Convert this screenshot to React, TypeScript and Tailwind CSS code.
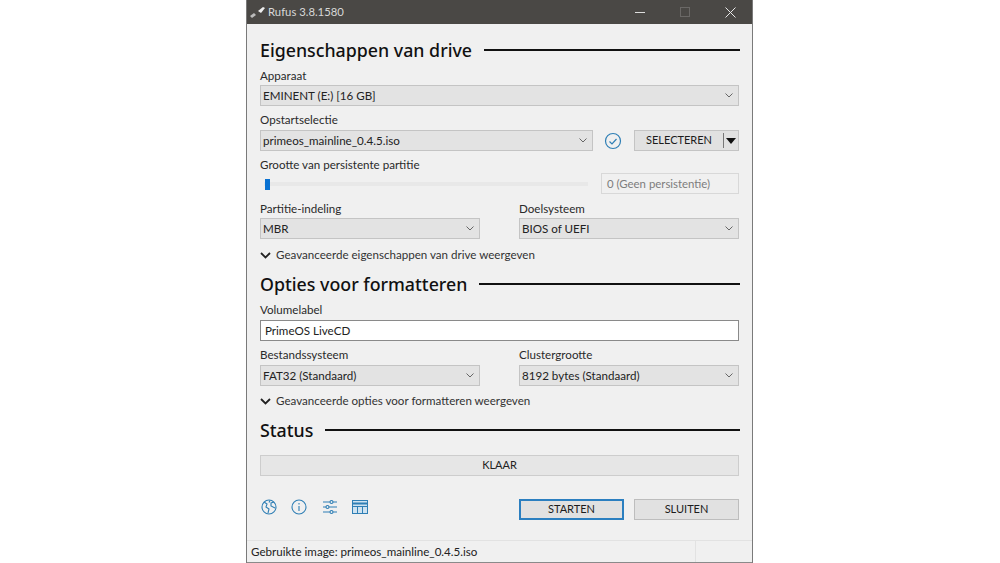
import React from 'react';

const Chevron = () => (
  <svg width="8" height="5" viewBox="0 0 8 5" className="shrink-0" fill="none" stroke="#666" strokeWidth="1">
    <path d="M.5.5L4 4 7.5.5" />
  </svg>
);

const BoldChevron = () => (
  <svg width="11" height="7" viewBox="0 0 11 7" className="shrink-0" fill="none" stroke="#222" strokeWidth="1.8">
    <path d="M1 1l4.5 4.5L10 1" />
  </svg>
);

const Select = ({ value, className = '' }: { value: string; className?: string }) => (
  <div className={`h-[21px] flex items-center justify-between bg-[#e3e3e3] border border-[#c4c4c4] pl-[2px] pr-[5px] text-[11.6px] text-[#222] ${className}`}>
    <span>{value}</span>
    <Chevron />
  </div>
);

const Label = ({ text, className = '' }: { text: string; className?: string }) => (
  <div className={`h-[20px] flex items-center text-[11.6px] text-[#2a2a2a] ${className}`}>{text}</div>
);

const Heading = ({ text }: { text: string }) => (
  <div className="flex items-center gap-[12px]">
    <span className="text-[17.8px] leading-[26px] font-medium text-[#111] whitespace-nowrap" style={{ fontFamily: '"Noto Sans", sans-serif' }}>{text}</span>
    <div className="flex-1 h-[2px] bg-[#111] mr-[-1px]" />
  </div>
);

const Expander = ({ text }: { text: string }) => (
  <div className="flex items-center gap-[5px] text-[11.6px] text-[#333] h-[20px]">
    <BoldChevron />
    <span>{text}</span>
  </div>
);

export default function App() {
  return (
    <div className="w-[1000px] h-[563px] bg-white flex justify-center overflow-hidden" style={{ fontFamily: 'Lato, sans-serif' }}>
      <div className="w-[507px] h-[563px] ml-[-1px] flex flex-col bg-[#f0f0f0] border-x border-[#7a7a7a]">
        {/* title bar */}
        <div className="h-[24px] flex items-center bg-[#4a4845] text-[#d8d8d8] text-[11.3px] shrink-0">
          <svg width="15" height="12" viewBox="0 0 15 12" className="ml-[3px] mr-[3px]">
            <path d="M0 10l4-3 2 2-4 3z" fill="#bbb" />
            <path d="M8 5l5-4 2 1-4 5z" fill="#eee" />
          </svg>
          <span>Rufus 3.8.1580</span>
          <div className="ml-auto flex items-center">
            <div className="w-[10px] h-[1px] bg-[#ddd] mr-[35px]" />
            <div className="w-[10px] h-[10px] border border-[#6a6866] mr-[35px]" />
            <svg width="11" height="11" viewBox="0 0 11 11" className="mr-[16px]" stroke="#e8e8e8" strokeWidth="1">
              <path d="M.5.5l10 10M10.5.5l-10 10" />
            </svg>
          </div>
        </div>

        <div className="flex-1 flex flex-col pl-[13px] pr-[13px] pt-[13px]">
          <Heading text="Eigenschappen van drive" />
          <Label text="Apparaat" className="mt-[3px]" />
          <Select value="EMINENT (E:) [16 GB]" className="mt-[-1px]" />
          <Label text="Opstartselectie" className="mt-[4px]" />
          <div className="flex items-center">
            <Select value="primeos_mainline_0.4.5.iso" className="w-[333px]" />
            <svg width="18" height="18" viewBox="0 0 18 18" className="ml-[11px]" fill="none" stroke="#2f7fb5" strokeWidth="1.2">
              <circle cx="9" cy="9" r="7.5" />
              <path d="M5.5 9.5l2.5 2.5 4.5-5" />
            </svg>
            <div className="ml-auto w-[105px] h-[21px] flex items-center bg-[#e1e1e1] border border-[#c4c4c4] text-[11px] text-[#1c1c1c]">
              <span className="w-[88px] text-center">SELECTEREN</span>
              <div className="w-[1px] h-[15px] bg-[#777]" />
              <svg width="10" height="6" viewBox="0 0 10 6" className="ml-[2px]">
                <path d="M0 0h10L5 6z" fill="#111" />
              </svg>
            </div>
          </div>
          <Label text="Grootte van persistente partitie" className="mt-[4px]" />
          <div className="flex items-center mt-[-2px]">
            <div className="relative w-[324px] h-[21px] flex items-center ml-[4px]">
              <div className="w-full h-[4px] bg-[#e8e8e8]" />
              <div className="absolute left-[1px] top-[6px] w-[5px] h-[11px] bg-[#0a72d2]" />
            </div>
            <div className="ml-auto w-[138px] h-[21px] flex items-center pl-[5px] bg-[#f0f0f0] border border-[#d8d8d8] text-[11.4px] text-[#7d7d7d]">
              0 (Geen persistentie)
            </div>
          </div>
          <div className="grid grid-cols-[220px_220px] gap-x-[39px] mt-[5px]">
            <Label text="Partitie-indeling" />
            <Label text="Doelsysteem" />
            <Select value="MBR" className="mt-[-1px]" />
            <Select value="BIOS of UEFI" className="mt-[-1px]" />
          </div>
          <div className="mt-[6px]">
            <Expander text="Geavanceerde eigenschappen van drive weergeven" />
          </div>

          <div className="mt-[6px]">
            <Heading text="Opties voor formatteren" />
          </div>
          <Label text="Volumelabel" className="mt-[3px]" />
          <div className="h-[21px] flex items-center pl-[4px] bg-white border border-[#8a8a8a] text-[11.6px] text-[#222]">
            PrimeOS LiveCD
          </div>
          <div className="grid grid-cols-[220px_220px] gap-x-[39px] mt-[4px]">
            <Label text="Bestandssysteem" />
            <Label text="Clustergrootte" />
            <Select value="FAT32 (Standaard)" />
            <Select value="8192 bytes (Standaard)" />
          </div>
          <div className="mt-[5px]">
            <Expander text="Geavanceerde opties voor formatteren weergeven" />
          </div>

          <div className="mt-[6px]">
            <Heading text="Status" />
          </div>
          <div className="h-[21px] mt-[12px] flex items-center justify-center bg-[#e6e6e6] border border-[#cdcdcd] text-[11px] text-[#222]">
            KLAAR
          </div>

          <div className="flex items-center mt-[23px]">
            <div className="flex items-center gap-[14.3px] ml-[1px] mb-[5px]">
              <svg width="16" height="16" viewBox="0 0 16 16" fill="none" stroke="#2f7fb5" strokeWidth="1.1">
                <circle cx="8" cy="8" r="7" />
                <path d="M3 3l3 2-1 3 3 2-1 4M13 3l-3 1 0 3 4 2M9 1.5l-1 2" />
              </svg>
              <svg width="16" height="16" viewBox="0 0 16 16" fill="none" stroke="#2f7fb5" strokeWidth="1.1">
                <circle cx="8" cy="8" r="7" />
                <path d="M8 7v5M8 4v1.5" />
              </svg>
              <svg width="16" height="16" viewBox="0 0 16 16" fill="none" stroke="#2f7fb5" strokeWidth="1.1">
                <path d="M1 3h14M1 8h14M1 13h14" />
                <circle cx="9.5" cy="3" r="1.5" fill="#f0f0f0" />
                <circle cx="5.5" cy="8" r="1.5" fill="#f0f0f0" />
                <circle cx="9.5" cy="13" r="1.5" fill="#f0f0f0" />
              </svg>
              <svg width="16" height="14" viewBox="0 0 16 14" fill="none" stroke="#2f7fb5" strokeWidth="1">
                <rect x=".5" y=".5" width="15" height="13" fill="#cfe3f1" />
                <path d="M.5 3.5h15" strokeWidth="2" />
                <path d="M.5 6.5h15M5.5 6.5v7M10.5 6.5v7" />
              </svg>
            </div>
            <div className="ml-auto flex gap-[10px]">
              <div className="w-[105px] h-[21px] flex items-center justify-center bg-[#e1e1e1] border-2 border-[#2b7fc0] text-[11px] text-[#1c1c1c]">
                STARTEN
              </div>
              <div className="w-[105px] h-[21px] flex items-center justify-center bg-[#e1e1e1] border border-[#bdbdbd] text-[11px] text-[#1c1c1c]">
                SLUITEN
              </div>
            </div>
          </div>
        </div>

        {/* status bar */}
        <div className="h-[23px] shrink-0 flex items-center justify-between border-t border-[#e2e2e2] border-b border-b-[#8a8a8a] pl-[4px] text-[11.6px] text-[#222]">
          <span>Gebruikte image: primeos_mainline_0.4.5.iso</span>
          <div className="w-[57px] h-full border-l border-[#e2e2e2]" />
        </div>
      </div>
    </div>
  );
}
